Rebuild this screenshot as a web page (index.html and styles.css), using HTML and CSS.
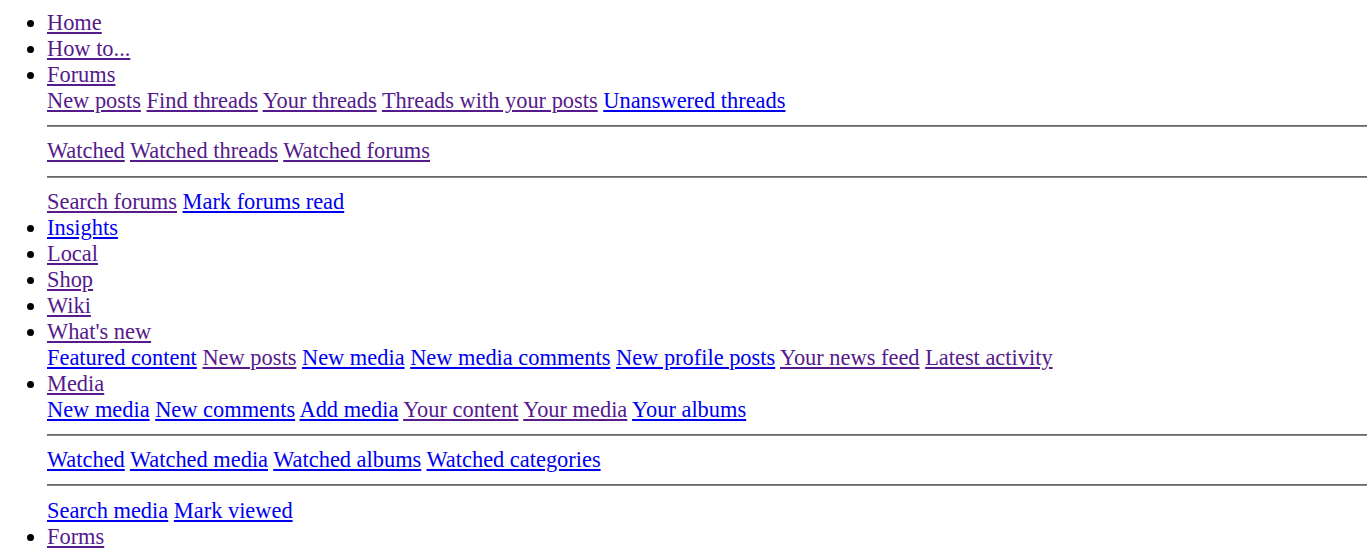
FILE: index.html
```html
<!DOCTYPE html>
<html lang="en">
<head>
<meta charset="utf-8">
<title>Navigation</title>
<link rel="stylesheet" href="styles.css">
</head>
<body>
<ul class="nav">
  <li><a class="v" href="#">Home</a></li>
  <li><a class="v" href="#">How to...</a></li>
  <li><a class="v" href="#">Forums</a>
    <div class="sub">
      <div class="row"><a class="v" href="#">New posts</a> <a class="v" href="#">Find threads</a> <a class="v" href="#">Your threads</a> <a class="v" href="#">Threads with your posts</a> <a class="u" href="#">Unanswered threads</a></div>
      <hr class="sep">
      <div class="row"><a class="v" href="#">Watched</a> <a class="v" href="#">Watched threads</a> <a class="v" href="#">Watched forums</a></div>
      <hr class="sep">
      <div class="row"><a class="v" href="#">Search forums</a> <a class="u" href="#">Mark forums read</a></div>
    </div>
  </li>
  <li><a class="u" href="#">Insights</a></li>
  <li><a class="v" href="#">Local</a></li>
  <li><a class="v" href="#">Shop</a></li>
  <li><a class="v" href="#">Wiki</a></li>
  <li><a class="v" href="#">What's new</a>
    <div class="sub">
      <div class="row"><a class="u" href="#">Featured content</a> <a class="v" href="#">New posts</a> <a class="u" href="#">New media</a> <a class="u" href="#">New media comments</a> <a class="u" href="#">New profile posts</a> <a class="v" href="#">Your news feed</a> <a class="v" href="#">Latest activity</a></div>
    </div>
  </li>
  <li><a class="v" href="#">Media</a>
    <div class="sub">
      <div class="row"><a class="u" href="#">New media</a> <a class="u" href="#">New comments</a> <a class="u" href="#">Add media</a> <a class="v" href="#">Your content</a> <a class="v" href="#">Your media</a> <a class="u" href="#">Your albums</a></div>
      <hr class="sep">
      <div class="row"><a class="u" href="#">Watched</a> <a class="u" href="#">Watched media</a> <a class="u" href="#">Watched albums</a> <a class="u" href="#">Watched categories</a></div>
      <hr class="sep">
      <div class="row"><a class="u" href="#">Search media</a> <a class="u" href="#">Mark viewed</a></div>
    </div>
  </li>
  <li><a class="v" href="#">Forms</a></li>
</ul>
</body>
</html>
```
FILE: styles.css
```css
html, body {
  background: #fff;
}
body {
  margin: 10px 0 8px 8px;
  font-family: "Liberation Serif", "Times New Roman", serif;
  font-size: 22.4px;
  line-height: 26px;
  color: #000;
}
.nav {
  margin: 0;
  padding-left: 39px;
  list-style: disc;
}
.nav a {
  text-decoration: underline;
}
.nav a.u {
  color: #0000ee;
}
.nav a.v {
  color: #551a8b;
}
.sep {
  margin: 0.5em 0;
  border: none;
  border-top: 1px solid #666;
  border-bottom: 1px solid #8a8a8a;
  height: 0;
}
```
